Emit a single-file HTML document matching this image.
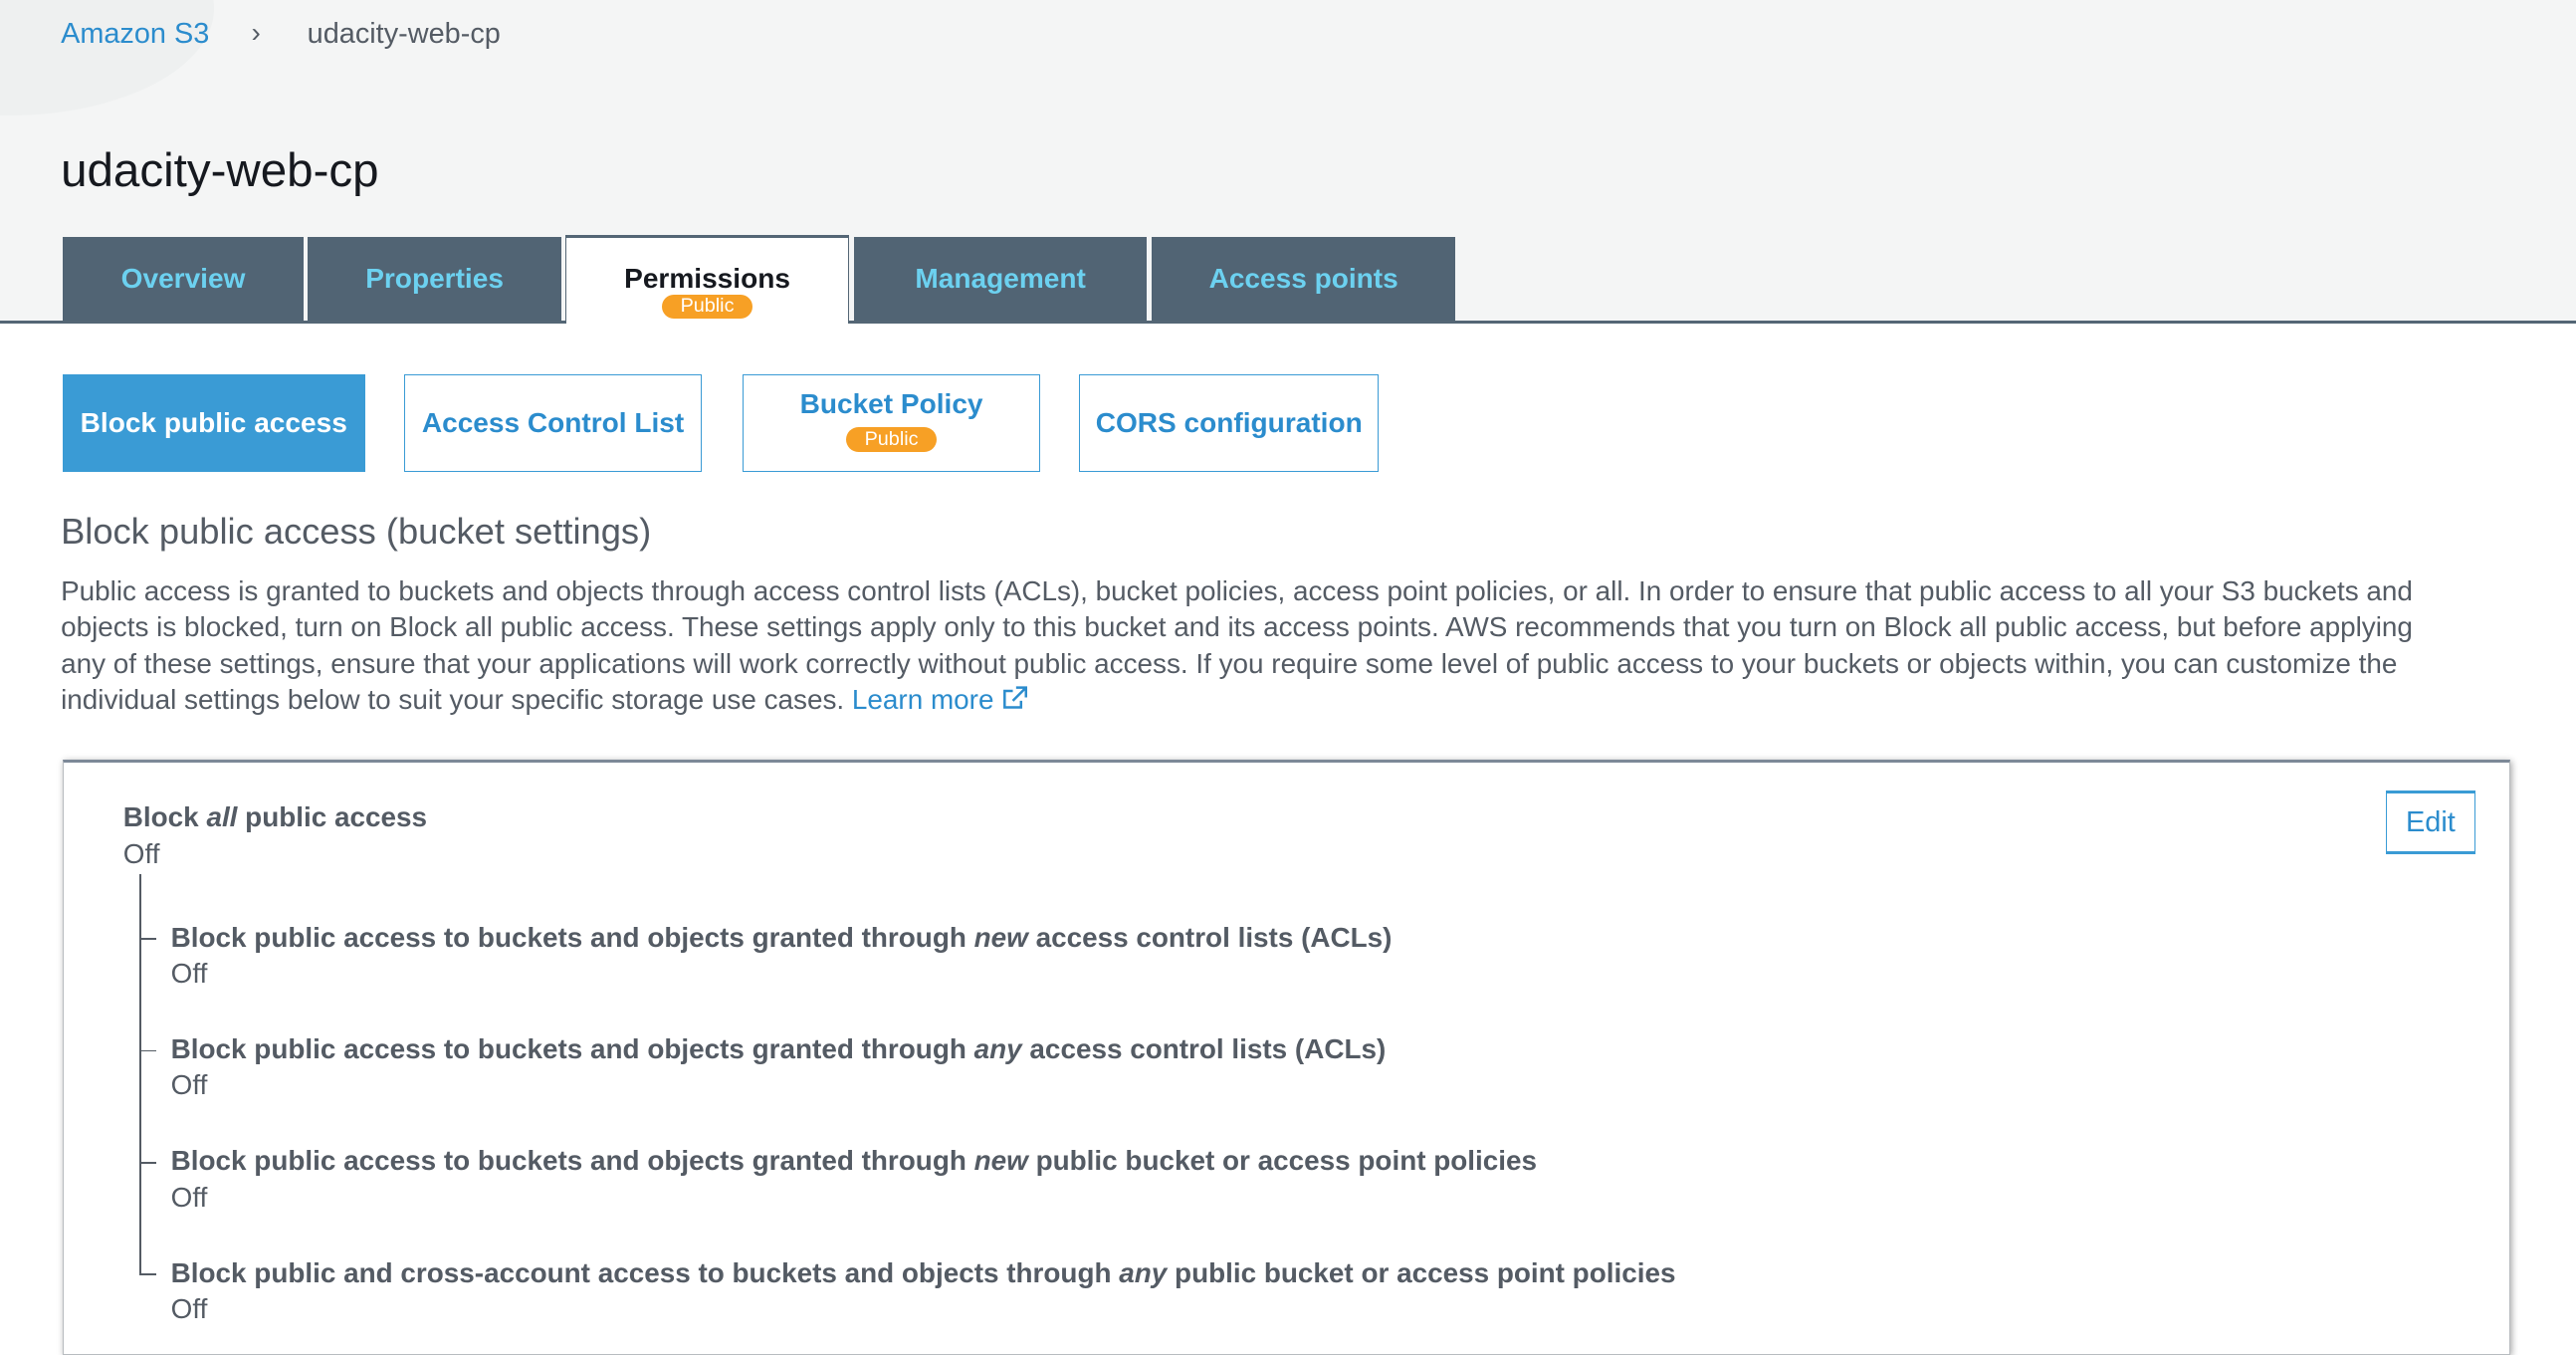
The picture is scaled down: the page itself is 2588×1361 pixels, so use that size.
<!DOCTYPE html>
<html><head><meta charset="utf-8"><style>
html,body{margin:0;padding:0;}
body{width:1568px;height:800px;overflow:hidden;zoom:1.65051;font-family:"Liberation Sans",Arial,sans-serif;background:#fff;position:relative;}
.top{position:absolute;left:0;top:0;width:1568px;height:197px;background:#f4f5f5;overflow:hidden}
.abs{position:absolute;white-space:nowrap}
.tab{position:absolute;top:144px;height:51px;background:#516474;color:#6cd1f0;font-weight:bold;font-size:17px;display:flex;align-items:center;justify-content:center}
.btn{position:absolute;top:228px;height:58px;border:1px solid #3a9bd5;color:#2b8ccd;font-weight:bold;font-size:17px;display:flex;flex-direction:column;align-items:center;justify-content:center;background:#fff}
.badge{background:#f7a025;color:#fff;font-size:12px;font-weight:normal;border-radius:8px;padding:0 11px;line-height:15px}
.lbl{position:absolute;left:104px;font-weight:bold;font-size:16.9px;color:#545b64;white-space:nowrap}
.off{position:absolute;left:104px;font-size:16.9px;color:#545b64}
.dash{position:absolute;left:85px;width:10px;height:1px;background:#545b64}
</style></head><body>
<div class="top">
 <div style="position:absolute;left:-120px;top:-60px;width:250px;height:130px;border-radius:50%;background:#eef0f0"></div>
</div>
<div class="abs" style="left:37px;top:11px;font-size:17.5px;color:#2b8ccd">Amazon S3</div>
<div class="abs" style="left:153px;top:10px;font-size:17px;color:#545b64">›</div>
<div class="abs" style="left:187px;top:11px;font-size:17.5px;color:#545b64">udacity-web-cp</div>
<div class="abs" style="left:37px;top:87px;font-size:28.8px;color:#16191f">udacity-web-cp</div>
<div class="abs" style="left:0;top:195px;width:1568px;height:2px;background:#546675"></div>
<div class="tab" style="left:38px;width:147px">Overview</div>
<div class="tab" style="left:187px;width:155px">Properties</div>
<div class="tab" style="left:344px;width:173px;top:143px;height:54px;background:#fff;border:1px solid #546675;border-top:2px solid #546675;border-bottom:none;box-sizing:border-box;color:#16191f;flex-direction:column;padding-top:12px">Permissions<span class="badge" style="margin-top:0px;font-size:12px;line-height:14px">Public</span></div>
<div class="tab" style="left:520px;width:178px">Management</div>
<div class="tab" style="left:701px;width:185px">Access points</div>

<div class="btn" style="left:38px;width:183px;background:#3a9bd5;color:#fff;border-color:#3a9bd5">Block public access</div>
<div class="btn" style="left:246px;width:180px">Access Control List</div>
<div class="btn" style="left:452px;width:180px"><span style="margin-top:-4px">Bucket Policy</span><span class="badge" style="margin-top:4px">Public</span></div>
<div class="btn" style="left:657px;width:181px">CORS configuration</div>

<div class="abs" style="left:37px;top:311px;font-size:22px;color:#545b64">Block public access (bucket settings)</div>
<div style="position:absolute;left:37px;top:349px;width:1445px;font-size:16.9px;line-height:22px;color:#545b64">Public access is granted to buckets and objects through access control lists (ACLs), bucket policies, access point policies, or all. In order to ensure that public access to all your S3 buckets and objects is blocked, turn on Block all public access. These settings apply only to this bucket and its access points. AWS recommends that you turn on Block all public access, but before applying any of these settings, ensure that your applications will work correctly without public access. If you require some level of public access to your buckets or objects within, you can customize the individual settings below to suit your specific storage use cases. <span style="color:#2b8ccd">Learn more <svg width="16" height="15" viewBox="0 0 16 15" style="vertical-align:-1px"><path d="M12 9v4H2V3h5M9 1h6v6M15 1 7 9" fill="none" stroke="#2b8ccd" stroke-width="1.5"/></svg></span></div>

<div style="position:absolute;left:38px;top:462px;width:1489px;height:360px;border:1px solid #b8bcc0;border-top:2px solid #7d8998;box-shadow:1px 1px 4px rgba(0,0,0,.35);background:#fff"></div>
<div class="abs" style="left:75px;top:488px;font-weight:bold;font-size:16.9px;color:#545b64">Block <i>all</i> public access</div>
<div class="abs" style="left:75px;top:510px;font-size:16.9px;color:#545b64">Off</div>
<div style="position:absolute;left:1452px;top:481px;width:55px;height:39px;border:1px solid #3a9bd5;border-top-width:2px;border-bottom-width:2px;box-sizing:border-box;color:#2b8ccd;font-size:17.5px;display:flex;align-items:center;justify-content:center">Edit</div>
<div style="position:absolute;left:85px;top:532px;width:1px;height:244px;background:#545b64"></div>
<div class="dash" style="top:571px"></div><div class="dash" style="top:639px"></div><div class="dash" style="top:707px"></div><div class="dash" style="top:775px"></div>
<div class="lbl" style="top:561px">Block public access to buckets and objects granted through <i>new</i> access control lists (ACLs)</div>
<div class="off" style="top:583px">Off</div>
<div class="lbl" style="top:629px">Block public access to buckets and objects granted through <i>any</i> access control lists (ACLs)</div>
<div class="off" style="top:651px">Off</div>
<div class="lbl" style="top:697px">Block public access to buckets and objects granted through <i>new</i> public bucket or access point policies</div>
<div class="off" style="top:719px">Off</div>
<div class="lbl" style="top:765px">Block public and cross-account access to buckets and objects through <i>any</i> public bucket or access point policies</div>
<div class="off" style="top:787px">Off</div>
</body></html>
